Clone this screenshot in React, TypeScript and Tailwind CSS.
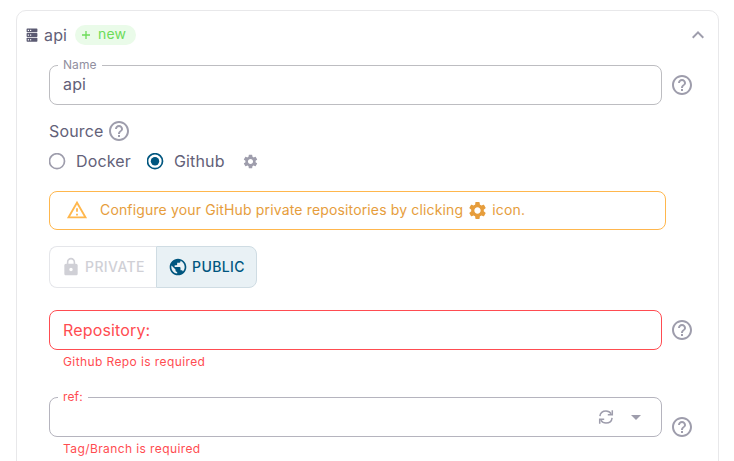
import type { ReactNode } from "react";
import {
  MdArrowDropDown,
  MdExpandLess,
  MdHelpOutline,
  MdLock,
  MdPublic,
  MdSettings,
} from "react-icons/md";

function ServerIcon() {
  return (
    <svg width="12" height="14" viewBox="0 0 12 14" fill="none">
      {[0.4, 5.1, 9.8].map((y) => (
        <g key={y}>
          <rect x="0.6" y={y} width="10.8" height="3.9" rx="0.7" fill="#5b5a72" />
          <rect x="1.8" y={y + 1.4} width="1.2" height="1.2" fill="#fff" />
          <rect x="4" y={y + 1.4} width="1.2" height="1.2" fill="#fff" />
        </g>
      ))}
    </svg>
  );
}

function WarningIcon() {
  return (
    <svg width="22" height="22" viewBox="0 0 24 24" fill="#ffb74d" className="-mt-0.5">
      <path d="M12 5.99L19.53 19H4.47L12 5.99M12 2L1 21h22L12 2zm1 14h-2v2h2v-2zm0-6h-2v4h2v-4z" />
    </svg>
  );
}

function SyncIcon() {
  return (
    <svg
      width="16"
      height="16"
      viewBox="0 0 16 16"
      fill="none"
      stroke="#9e9dac"
      strokeWidth="1.5"
    >
      <path d="M1.9 7.2C2.3 4 4.8 1.9 8 1.9c2.2 0 4 1 5.2 2.9" />
      <path d="M14.3 1.2v4.6H9.8" />
      <path d="M14.1 8.8c-.4 3.2-2.9 5.3-6.1 5.3-2.2 0-4-1-5.2-2.9" />
      <path d="M1.7 14.8v-4.6h4.5" />
    </svg>
  );
}

function Help() {
  return <MdHelpOutline size={24} className="shrink-0 text-[#9e9dac]" />;
}

function Label({ children, className }: { children: ReactNode; className: string }) {
  return (
    <span
      className={`absolute left-2 -top-[9px] bg-white pl-[5px] text-[12px] leading-4 ${className}`}
    >
      {children}
    </span>
  );
}

function Radio({ checked, label }: { checked?: boolean; label: string }) {
  return (
    <div className="flex items-center gap-2.5">
      <svg
        width="17"
        height="17"
        viewBox="0 0 17 17"
        className={checked ? "text-[#00567f]" : "text-[#9e9dac]"}
      >
        <circle cx="8" cy="8.2" r="7.5" fill="none" stroke="currentColor" strokeWidth="1.7" />
        {checked && <circle cx="8" cy="8.2" r="4.2" fill="currentColor" />}
      </svg>
      <span>{label}</span>
    </div>
  );
}

export default function App() {
  return (
    <div className="h-[461px] overflow-hidden bg-white pl-4 pt-2.5 font-['Inter',sans-serif] text-base leading-6 tracking-[0.15px] text-[#636178]">
      <section className="h-[480px] w-[703px] rounded-[10px] border border-[#e8e8ea]">
        <header className="flex h-12 items-center pl-[9px] pr-2">
          <ServerIcon />
          <h1 className="ml-1.5">api</h1>
          <span className="ml-2 flex h-5 w-[61px] items-center rounded-full bg-[#eafbe9] pl-[7px] text-sm leading-5 text-[#6cdc59]">
            <svg width="8" height="8" viewBox="0 0 8 8" stroke="#6cdc59" strokeWidth="1.3">
              <path d="M0 4h8M4 0v8" />
            </svg>
            <span className="-mt-0.5 ml-2">new</span>
          </span>
          <MdExpandLess size={24} className="ml-auto text-[#9e9dac]" />
        </header>

        <div className="pl-8 pt-1.5">
          <div className="flex items-center gap-2">
            <div className="relative h-10 w-[613px] rounded-lg border border-[#bdbdc1] pl-[13px] leading-[37px]">
              <Label className="w-[44px] tracking-[0.05px] text-[#918fa0]">Name</Label>
              api
            </div>
            <Help />
          </div>

          <div className="mt-3.5 flex h-6 items-center gap-1">
            <span>Source</span>
            <Help />
          </div>
          <div className="mt-1.5 flex h-6 items-center gap-4">
            <Radio label="Docker" />
            <Radio label="Github" checked />
            <MdSettings size={17} className="ml-px text-[#9e9dac]" />
          </div>

          <div className="mt-[18px] flex h-[39px] w-[617px] items-center rounded-lg border border-[#ffb74d] pl-4 text-sm text-[#e69d3c]">
            <WarningIcon />
            <span className="-mt-0.5 ml-3">
              Configure your GitHub private repositories by clicking
            </span>
            <MdSettings size={21} className="mx-1 -mt-px" />
            <span className="-mt-0.5">icon.</span>
          </div>

          <div className="mt-4 flex h-[42px] text-sm font-medium tracking-[0.4px]">
            <div className="flex w-[107px] items-center rounded-l-lg border border-r-0 border-[#e5e6ea] pl-[11px] text-[#d0d0d6]">
              <MdLock size={20} />
              <span className="ml-1">PRIVATE</span>
            </div>
            <div className="flex w-[101px] items-center rounded-r-lg border border-[#cfdce3] bg-[#e9f1f5] pl-[11px] text-[#00567f]">
              <MdPublic size={20} />
              <span className="ml-1">PUBLIC</span>
            </div>
          </div>

          <div className="mt-[22px] flex items-center gap-2">
            <div className="h-10 w-[613px] rounded-lg border border-[#ff4c51] pl-[13px] leading-[38px] text-[#ff4c51]">
              Repository:
            </div>
            <Help />
          </div>
          <p className="ml-3.5 mt-[3px] h-[17px] text-[12px] leading-[17px] tracking-[0.4px] text-[#ff4c51]">
            Github Repo is required
          </p>

          <div className="mt-[27px] flex h-10 gap-2">
            <div className="relative flex h-10 w-[613px] items-center justify-end rounded-lg border border-[#b5b4be] pr-[13px]">
              <Label className="w-[30px] text-[#ff4c51]">ref:</Label>
              <SyncIcon />
              <MdArrowDropDown size={24} className="ml-2.5 text-[#9e9dac]" />
            </div>
            <div className="mt-[18px]">
              <Help />
            </div>
          </div>
          <p className="ml-3.5 mt-[3px] h-[17px] text-[12px] leading-[17px] tracking-[0.4px] text-[#ff4c51]">
            Tag/Branch is required
          </p>
        </div>
      </section>
    </div>
  );
}
